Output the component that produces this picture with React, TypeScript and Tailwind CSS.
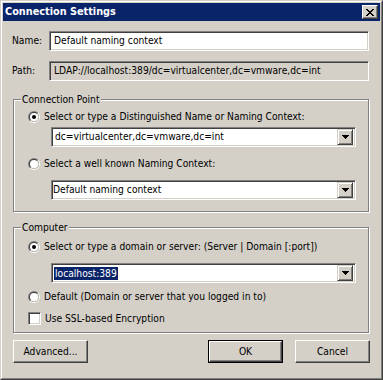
import React from "react";

const sunken =
  "border border-t-[#808080] border-l-[#808080] border-r-white border-b-white shadow-[inset_1px_1px_0_#404040,inset_-1px_-1px_0_#d4d0c8]";
const raised =
  "border border-t-white border-l-white border-r-[#404040] border-b-[#404040] shadow-[inset_-1px_-1px_0_#808080]";
const etched =
  "relative border border-[#808080] shadow-[inset_1px_1px_0_#fff,1px_1px_0_#fff]";

function Radio({ checked }: { checked?: boolean }) {
  return (
    <svg width="12" height="12" viewBox="0 0 12 12" className="shrink-0">
      <path d="M1.757 10.243A6 6 0 0 1 10.243 1.757Z" fill="#808080" />
      <path d="M10.243 1.757A6 6 0 0 1 1.757 10.243Z" fill="#ffffff" />
      <circle cx="6" cy="6" r="5" fill="#404040" />
      <path d="M9.536 2.464A5 5 0 0 1 2.464 9.536Z" fill="#d4d0c8" />
      <circle cx="6" cy="6" r="4" fill="#ffffff" />
      {checked && <circle cx="6" cy="6" r="2" fill="#000000" />}
    </svg>
  );
}

function DropButton() {
  return (
    <div className="w-[16px] h-[16px] flex items-center justify-center bg-[#d4d0c8] border border-t-[#d4d0c8] border-l-[#d4d0c8] border-r-[#404040] border-b-[#404040] shadow-[inset_1px_1px_0_#fff,inset_-1px_-1px_0_#808080]">
      <svg width="7" height="4" viewBox="0 0 7 4">
        <path d="M0 0h7v1H6v1H5v1H4v1H3V3H2V2H1V1H0Z" fill="#000" />
      </svg>
    </div>
  );
}

function Combo({
  value,
  pad = "pl-[3px]",
  selected,
}: {
  value: string;
  pad?: string;
  selected?: boolean;
}) {
  return (
    <div className={`ml-[37px] w-[305px] h-[20px] bg-white flex items-center justify-between pr-[2px] ${sunken}`}>
      <div className={`${pad} flex items-center`}>
        {selected ? (
          <span className="bg-[#0a246a] text-white px-[1px] leading-[13px]">{value}</span>
        ) : (
          <span>{value}</span>
        )}
      </div>
      <DropButton />
    </div>
  );
}

function RadioRow({ checked, label }: { checked?: boolean; label: string }) {
  return (
    <div className="flex items-center gap-[4px] ml-[14px] h-[13px]">
      <Radio checked={checked} />
      <span>{label}</span>
    </div>
  );
}

function Button({ label, isDefault }: { label: string; isDefault?: boolean }) {
  if (isDefault) {
    return (
      <div className="w-[75px] h-[23px] border border-black">
        <div className={`w-full h-full flex items-center justify-center bg-[#d4d0c8] ${raised}`}>{label}</div>
      </div>
    );
  }
  return (
    <div className={`w-[75px] h-[23px] flex items-center justify-center bg-[#d4d0c8] ${raised}`}>{label}</div>
  );
}

export default function App() {
  return (
    <div className="w-[383px] h-[380px] bg-[#d4d0c8] font-['DejaVu_Sans_Condensed','Liberation_Sans',sans-serif] text-[10.2px] text-black overflow-hidden">
      <div className="w-full h-full border border-t-[#d4d0c8] border-l-[#d4d0c8] border-r-[#404040] border-b-[#404040]">
        <div className="w-full h-full border border-t-white border-l-white border-r-[#808080] border-b-[#808080] p-[1px]">
          {/* title bar */}
          <div className="h-[18px] bg-[#0a246a] flex items-center justify-between pl-[2px] pr-[2px]">
            <span className="text-white font-bold text-[10.8px]">Connection Settings</span>
            <div className={`w-[16px] h-[14px] bg-[#d4d0c8] flex items-center justify-center ${raised}`}>
              <svg width="8" height="7" viewBox="0 0 8 7">
                <path d="M0 0h2v1h1v1h2V1h1V0h2v1H7v1H6v1H5v1h1v1h1v1h1v1H6V6H5V5H3v1H2v1H0V6h1V5h1V4h1V3H2V2H1V1H0Z" fill="#000" />
              </svg>
            </div>
          </div>

          <div className="pl-[10px] pt-[10px]">
            <div className="flex items-center h-[20px]">
              <span className="w-[37px] ml-[-1px]">Name:</span>
              <div className={`w-[320px] h-[20px] bg-white flex items-center pl-[4px] ${sunken}`}>
                Default naming context
              </div>
            </div>
            <div className="flex items-center h-[20px] mt-[10px]">
              <span className="w-[37px] ml-[-1px]">Path:</span>
              <div className={`w-[320px] h-[20px] bg-[#d4d0c8] flex items-center pl-[4px] ${sunken}`}>
                LDAP://localhost:389/dc=virtualcenter,dc=vmware,dc=int
              </div>
            </div>

            {/* Connection Point */}
            <div className={`mt-[18px] w-[356px] h-[113px] ${etched}`}>
              <span className="absolute top-[-7px] left-[7px] px-[1px] bg-[#d4d0c8] leading-[13px]">Connection Point</span>
              <div className="pt-[10px]">
                <RadioRow checked label="Select or type a Distinguished Name or Naming Context:" />
                <div className="mt-[4px]">
                  <Combo value="dc=virtualcenter,dc=vmware,dc=int" />
                </div>
                <div className="mt-[10px]">
                  <RadioRow label="Select a well known Naming Context:" />
                </div>
                <div className="mt-[10px]">
                  <Combo value="Default naming context" pad="pl-[1px]" />
                </div>
              </div>
            </div>

            {/* Computer */}
            <div className={`mt-[15px] w-[356px] h-[106px] ${etched}`}>
              <span className="absolute top-[-7px] left-[7px] px-[1px] bg-[#d4d0c8] leading-[13px]">Computer</span>
              <div className="pt-[12px]">
                <RadioRow checked label="Select or type a domain or server: (Server | Domain [:port])" />
                <div className="mt-[10px]">
                  <Combo value="localhost:389" pad="pl-[2px]" selected />
                </div>
                <div className="mt-[7px]">
                  <RadioRow label="Default (Domain or server that you logged in to)" />
                </div>
                <div className="flex items-center gap-[4px] ml-[14px] h-[13px] mt-[9px]">
                  <div className={`w-[13px] h-[13px] bg-white ${sunken}`} />
                  <span>Use SSL-based Encryption</span>
                </div>
              </div>
            </div>

            <div className="flex items-center mt-[7px] w-[357px]">
              <Button label="Advanced..." />
              <div className="flex-1" />
              <Button label="OK" isDefault />
              <div className="w-[12px]" />
              <Button label="Cancel" />
            </div>
          </div>
        </div>
      </div>
    </div>
  );
}
